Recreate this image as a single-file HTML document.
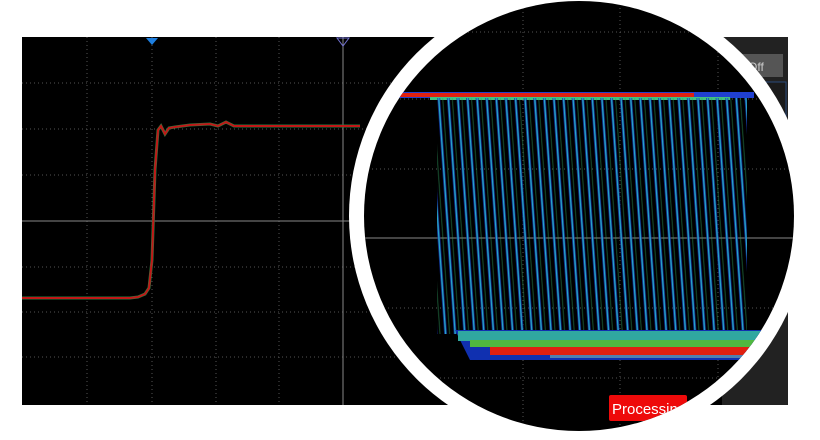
<!DOCTYPE html>
<html><head><meta charset="utf-8"><style>
html,body{margin:0;padding:0;background:#fff;width:820px;height:440px;overflow:hidden}
svg{display:block}
</style></head><body>
<svg width="820" height="440" viewBox="0 0 820 440" xmlns="http://www.w3.org/2000/svg">
<defs>
<clipPath id="c"><circle cx="579" cy="216" r="215"/></clipPath>
<pattern id="ln" patternUnits="userSpaceOnUse" width="9.6" height="260" patternTransform="translate(437,95) skewX(4)">
<rect x="0" y="0" width="3" height="260" fill="#1028a0" opacity=".8"/>
<rect x="0.8" y="0" width="1.4" height="260" fill="#28a8c8"/>
<rect x="5" y="0" width="1" height="260" fill="#30a060" opacity=".5"/>
</pattern>
</defs>
<rect x="22" y="37" width="766" height="368" fill="#000"/>
<rect x="722" y="37" width="66" height="368" fill="#222"/>
<rect x="742" y="54" width="41" height="23" fill="#555"/>
<text x="748" y="71" font-family="Liberation Sans,sans-serif" font-size="12" fill="#ccc">Off</text>
<rect x="724" y="82" width="62" height="36" fill="#1b1b1b" stroke="#2a4a7a" stroke-width="1"/>
<g stroke="#555" stroke-width="1" stroke-dasharray="1,3">
<line x1="87" y1="37" x2="87" y2="405"/><line x1="152" y1="37" x2="152" y2="405"/>
<line x1="216" y1="37" x2="216" y2="405"/><line x1="279" y1="37" x2="279" y2="405"/>
<line x1="22" y1="83" x2="722" y2="83"/><line x1="22" y1="129" x2="722" y2="129"/>
<line x1="22" y1="175" x2="722" y2="175"/><line x1="22" y1="267" x2="722" y2="267"/>
<line x1="22" y1="312" x2="722" y2="312"/><line x1="22" y1="357" x2="722" y2="357"/>
</g>
<line x1="22" y1="221" x2="380" y2="221" stroke="#888"/>
<line x1="343" y1="37" x2="343" y2="405" stroke="#888"/>
<polygon points="146,38 158,38 152,45" fill="#1e7fe0"/>
<polygon points="337,38 349,38 343,46" fill="none" stroke="#7070d0"/>
<path d="M22,298 L130,298 L138,297 L145,294 L149,288 L152,260 L155,170 L158,130 L161,126 L165,134 L169,128 L175,127 L190,125 L210,124 L218,126 L226,122 L234,126 L260,126 L360,126" fill="none" stroke="#2a7a40" stroke-width="3"/>
<path d="M22,298 L130,298 L138,297 L145,294 L149,288 L152,260 L155,170 L158,130 L161,126 L165,134 L169,128 L175,127 L190,125 L210,124 L218,126 L226,122 L234,126 L260,126 L360,126" fill="none" stroke="#c01818" stroke-width="2"/>
<circle cx="579" cy="216" r="230" fill="#fff"/>
<circle cx="579" cy="216" r="215" fill="#000"/>
<g clip-path="url(#c)">
<g stroke="#555" stroke-width="1" stroke-dasharray="1,3">
<line x1="523" y1="0" x2="523" y2="440"/><line x1="620" y1="0" x2="620" y2="440"/><line x1="718" y1="0" x2="718" y2="440"/>
<line x1="364" y1="32" x2="800" y2="32"/><line x1="364" y1="99" x2="800" y2="99"/><line x1="364" y1="169" x2="800" y2="169"/>
<line x1="364" y1="308" x2="800" y2="308"/><line x1="364" y1="378" x2="800" y2="378"/>
</g>
<line x1="364" y1="238" x2="800" y2="238" stroke="#888"/>
<rect x="364" y="92" width="390" height="6" fill="#2040d0"/>
<rect x="364" y="93" width="330" height="4" fill="#e02010"/>
<rect x="430" y="97" width="300" height="3" fill="#40c080"/>
<rect x="437" y="98" width="310" height="236" fill="url(#ln)"/>
<path d="M455,330 L770,330 L770,360 L470,360 Z" fill="#1030b0"/>
<rect x="458" y="331" width="310" height="10" fill="#30a8a0"/>
<rect x="470" y="340" width="300" height="7" fill="#50b840"/>
<rect x="490" y="347" width="280" height="8" fill="#e02010"/>
<rect x="550" y="355" width="220" height="3" fill="#5080b0"/>
<rect x="609" y="395" width="78" height="26" rx="2" fill="#ee0a0a"/>
<text x="612" y="414" font-family="Liberation Sans,sans-serif" font-size="15" fill="#fff">Processing</text>
</g>
</svg>
</body></html>
